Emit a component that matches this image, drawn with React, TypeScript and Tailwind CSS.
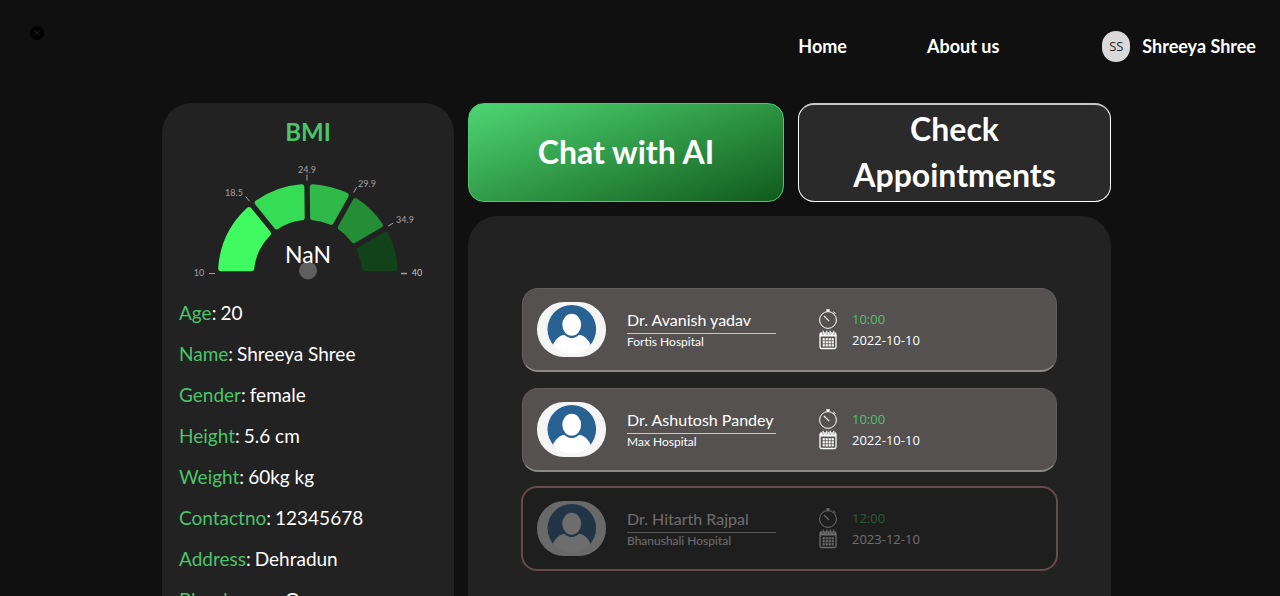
import React from "react";

const GAUGE = { cx: 116, cy: 113, outer: 90, inner: 54, pad: 3, round: 3 };
const MIN = 10;
const MAX = 40;
const SEGMENTS = [
  { from: 10, to: 18.5, color: "#3ffa60" },
  { from: 18.5, to: 24.9, color: "#36dc54" },
  { from: 24.9, to: 29.9, color: "#2eb948" },
  { from: 29.9, to: 34.9, color: "#238e36" },
  { from: 34.9, to: 40, color: "#11421a" },
];
const LABELS = [
  { value: 10, x: 7, y: 115, strong: false },
  { value: 18.5, x: 42, y: 35, strong: false },
  { value: 24.9, x: 115, y: 12, strong: false },
  { value: 29.9, x: 175, y: 26, strong: false },
  { value: 34.9, x: 213, y: 62, strong: false },
  { value: 40, x: 225, y: 115, strong: true },
];

const angleOf = (value: number) => Math.PI * (1 - (value - MIN) / (MAX - MIN));

function segmentPath(from: number, to: number) {
  const { cx, cy, outer, inner, pad, round } = GAUGE;
  const ro = outer - round;
  const ri = inner + round;
  const gap = pad + round - 0.3;
  const a = angleOf(from);
  const b = angleOf(to);
  const at = (r: number, t: number) =>
    `${(cx + r * Math.cos(t)).toFixed(2)} ${(cy - r * Math.sin(t)).toFixed(2)}`;
  const go = Math.asin(gap / ro);
  const gi = Math.asin(gap / ri);
  return `M${at(ri, a - gi)} L${at(ro, a - go)} A${ro} ${ro} 0 0 1 ${at(ro, b + go)} L${at(ri, b + gi)} A${ri} ${ri} 0 0 0 ${at(ri, a - gi)}Z`;
}

function Gauge() {
  const { cx, cy } = GAUGE;
  return (
    <svg viewBox="0 0 232 124" className="mx-auto block h-[124px] w-[232px]" role="img" aria-label="BMI gauge">
      {SEGMENTS.map((s) => (
        <path key={s.from} d={segmentPath(s.from, s.to)} fill={s.color} stroke={s.color} strokeWidth="6" strokeLinejoin="round" />
      ))}
      {LABELS.map((l) => {
        const t = angleOf(l.value);
        return (
          <g key={l.value}>
            <line
              x1={cx + 93 * Math.cos(t)}
              y1={cy - 0.5 - 93 * Math.sin(t)}
              x2={cx + 99 * Math.cos(t)}
              y2={cy - 0.5 - 99 * Math.sin(t)}
              stroke="#a3a3a3"
              strokeWidth={l.strong ? 1.5 : 1}
            />
            <text x={l.x} y={l.y} textAnchor="middle" fontSize="9" fill={l.strong ? "#c4c4c4" : "#a3a3a3"}>
              {l.value}
            </text>
          </g>
        );
      })}
      <circle cx="116" cy="109.500" r="9" fill="#5f5f5f" />
      <text x="116" y="102" textAnchor="middle" fontSize="23" fill="#ffffff">
        NaN
      </text>
    </svg>
  );
}

function Avatar() {
  return (
    <svg viewBox="0 0 69 55" className="h-[55px] w-[69px] shrink-0" aria-hidden="true">
      <defs>
        <clipPath id="avatar-disc">
          <circle cx="34.800" cy="27.300" r="24.300" />
        </clipPath>
      </defs>
      <rect width="69" height="55" rx="27" fill="#f5f5f6" />
      <g clipPath="url(#avatar-disc)">
        <rect width="69" height="44" fill="#286292" />
        <path d="M8 55L14.500 47C17 38 22 33 28.500 32.700Q35 39.500 41 32.700C47.500 33 53 38 55 47L62 55Z" fill="#fff" />
        <ellipse cx="34.700" cy="23" rx="10.800" ry="13" fill="#286292" />
        <ellipse cx="34.700" cy="22.700" rx="9.400" ry="11" fill="#fff" />
      </g>
    </svg>
  );
}

function StopwatchIcon() {
  return (
    <svg viewBox="0 0 18 20" className="h-5 w-[18px]" fill="none" stroke="#fff" aria-hidden="true">
      <circle cx="9" cy="11" r="8.400" strokeWidth="1" />
      <path d="M7.200 1h3.600M9 1v2" strokeWidth="1.600" />
      <path d="M14.300 2.800l2.200 1.700M15.400 3.600l-1 1.300" strokeWidth="1" />
      <path d="M5 7l5.200 5.200" strokeWidth="1.200" />
    </svg>
  );
}

function CalendarIcon() {
  const columns = [3.6, 6.6, 9.6, 12.6];
  const rows = [8.2, 11.2, 14.2];
  return (
    <svg viewBox="0 0 18 20" className="h-5 w-[18px]" aria-hidden="true">
      <rect x="1" y="3" width="16" height="15.500" rx="1.500" fill="none" stroke="#fff" strokeWidth="1.300" />
      <path d="M1 3h16v3.500H1z" fill="#fff" />
      {[3.5, 7, 10.5, 14].map((x) => (
        <rect key={x} x={x} y="0.600" width="1.500" height="4" rx="0.700" fill="#fff" stroke="#555" strokeWidth="0.400" />
      ))}
      {rows.map((y) => columns.map((x) => <rect key={`${x}-${y}`} x={x} y={y} width="2.200" height="2.200" fill="#fff" />))}
    </svg>
  );
}

type Appointment = { doctor: string; hospital: string; time: string; date: string; past?: boolean };

const APPOINTMENTS: Appointment[] = [
  { doctor: "Dr. Avanish yadav", hospital: "Fortis Hospital", time: "10:00", date: "2022-10-10" },
  { doctor: "Dr. Ashutosh Pandey", hospital: "Max Hospital", time: "10:00", date: "2022-10-10" },
  { doctor: "Dr. Hitarth Rajpal", hospital: "Bhanushali Hospital", time: "12:00", date: "2023-12-10", past: true },
];

function AppointmentCard({ item }: { item: Appointment }) {
  return (
    <li
      className={
        item.past
          ? "-mx-px -mt-0.5 rounded-2xl border-2 border-[#664a4c] bg-[#1e1e1e] px-[14px] py-[13px]"
          : "rounded-2xl border border-b-2 border-[#625e5d] border-b-[#8c8a89] bg-[#555150] px-[14px] py-[13px]"
      }
    >
      <div className={item.past ? "flex items-center opacity-35" : "flex items-center"}>
        <Avatar />
        <div className="ml-[21px] w-[149px]">
          <h3 className="border-b border-[#c8c8c8] pb-0.5 text-base leading-[22px] whitespace-nowrap text-white">{item.doctor}</h3>
          <p className="text-xs leading-4 text-white">{item.hospital}</p>
        </div>
        <div className="ml-[43px] grid grid-cols-[18px_auto] items-center gap-x-[15px] font-['Open_Sans','Noto_Sans',sans-serif] text-[13px] leading-[21px]">
          <StopwatchIcon />
          <span className="text-[#4cc46a]">{item.time}</span>
          <CalendarIcon />
          <span className="text-white">{item.date}</span>
        </div>
      </div>
    </li>
  );
}

const DETAILS = [
  ["Age", "20"],
  ["Name", "Shreeya Shree"],
  ["Gender", "female"],
  ["Height", "5.6 cm"],
  ["Weight", "60kg kg"],
  ["Contactno", "12345678"],
  ["Address", "Dehradun"],
  ["Bloodgroup", "O"],
];

export default function App() {
  return (
    <div className="flex h-screen flex-col overflow-hidden bg-[#101010] font-['Lato','Open_Sans',sans-serif] text-white">
      <header className="flex h-[103px] shrink-0 items-start justify-between pr-6 pl-[30px]">
        <button type="button" aria-label="Close" className="mt-[26px] flex size-[14px] items-center justify-center rounded-full bg-black">
          <svg viewBox="0 0 6 6" className="size-[6px]" stroke="#222" strokeWidth="1" aria-hidden="true">
            <path d="M.5.5l5 5M5.500.5l-5 5" />
          </svg>
        </button>
        <nav className="mt-[30px] flex h-8 items-center text-lg font-bold">
          <a href="#home">Home</a>
          <a href="#about" className="ml-20">About us</a>
          <a href="#profile" className="ml-[103px] flex items-center gap-3">
            <span className="flex h-[31px] w-7 items-center justify-center rounded-full bg-[#d9d9d9] font-['Open_Sans',sans-serif] text-[13px] font-medium text-[#222]">SS</span>
            <span>Shreeya Shree</span>
          </a>
        </nav>
      </header>

      <main className="grid min-h-0 flex-1 grid-cols-[292fr_643fr] gap-[14px] pr-[169px] pl-[162px]">
        <aside className="overflow-hidden rounded-t-[30px] bg-[#222222]">
          <h2 className="mt-[11px] text-center text-2xl leading-9 font-bold text-[#4cc46a]">BMI</h2>
          <div className="mt-[11px]">
            <Gauge />
          </div>
          <dl className="mt-[14px] flex flex-col gap-[14px] pl-[17px] text-[19px] leading-[27px]">
            {DETAILS.map(([label, value]) => (
              <div key={label} className="flex gap-1 whitespace-nowrap">
                <dt className="text-[#4cc46a]">
                  {label}
                  <span className="text-white">:</span>
                </dt>
                <dd>{value}</dd>
              </div>
            ))}
          </dl>
        </aside>

        <div className="flex min-h-0 flex-col gap-[14px]">
          <div className="grid shrink-0 grid-cols-[316fr_313fr] gap-[14px] text-[32px] leading-[46px] font-bold">
            <button type="button" className="h-[99px] rounded-2xl border border-[#4ec96e] bg-[linear-gradient(160deg,#4ed673_0%,#115a1b_100%)] pb-0.5">
              Chat with AI
            </button>
            <button type="button" className="h-[99px] rounded-2xl border border-t-2 border-white border-t-[#c8c8c8] bg-[#2a2a2a] px-12 pb-0.5">
              Check Appointments
            </button>
          </div>
          <section className="min-h-0 flex-1 overflow-hidden rounded-t-[30px] bg-[#222222] px-[54px] pt-[72px]">
            <ul className="flex flex-col gap-4">
              {APPOINTMENTS.map((item) => (
                <AppointmentCard key={item.doctor} item={item} />
              ))}
            </ul>
          </section>
        </div>
      </main>
    </div>
  );
}
